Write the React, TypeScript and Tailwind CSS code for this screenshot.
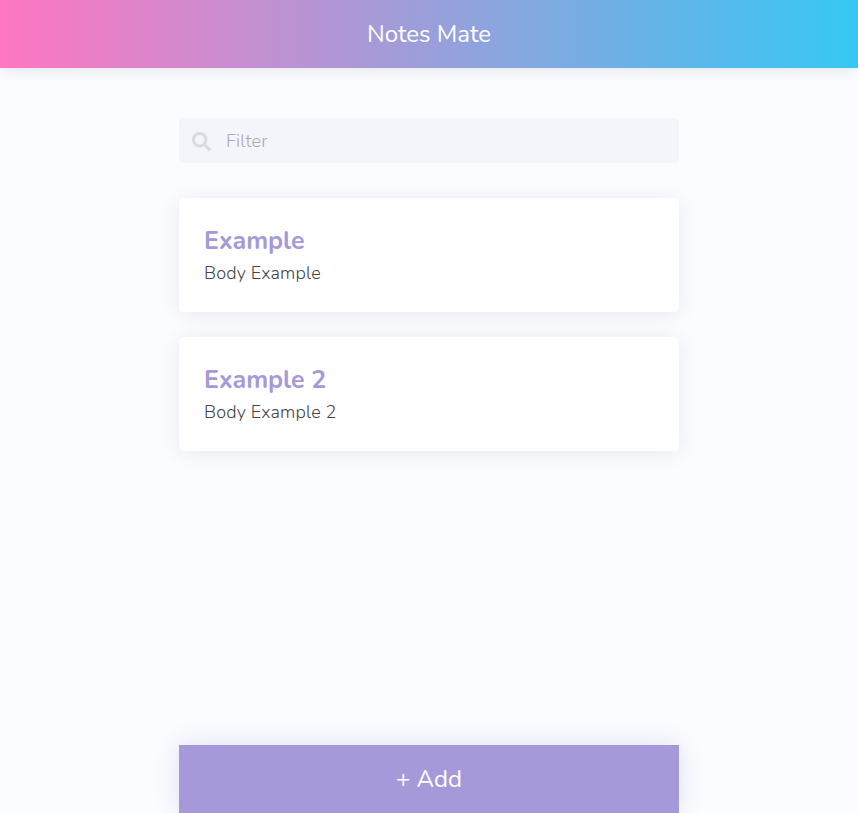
import { FaSearch } from "react-icons/fa";

const notes = [
  { title: "Example", body: "Body Example" },
  { title: "Example 2", body: "Body Example 2" },
];

export default function App() {
  return (
    <div className="flex h-[813px] flex-col items-center overflow-hidden bg-[#fbfcff] font-[Nunito,'Open_Sans',sans-serif]">
      <header className="flex h-[68px] w-full shrink-0 items-center justify-center bg-[linear-gradient(to_right,#ff76c1,#36c8f4)] text-2xl text-white shadow-[0_0_15px_rgba(0,0,0,0.12)]">
        Notes Mate
      </header>
      <main className="flex w-[500px] grow flex-col pt-[50px]">
        <label className="flex h-[45px] items-center rounded-[5px] bg-[#f3f5fa] pl-[13px]">
          <FaSearch className="mt-px size-[19px] text-[#dadada]" />
          <input placeholder="Filter" className="ml-[15px] grow text-lg font-light tracking-[0.17px] outline-none placeholder:text-[#a9a9b5]" />
        </label>
        <div className="mt-[35px] flex flex-col gap-[25px]">
          {notes.map((n) => (
            <article key={n.title} className="h-[114px] rounded-[5px] bg-white px-[25px] pt-[26px] shadow-[0_2px_20px_rgba(0,0,20,0.08)]">
              <h2 className="text-[25px] leading-[34px] font-bold text-[#a599d9]">{n.title}</h2>
              <p className="mt-px text-lg font-light tracking-[0.15px] text-[#444]">{n.body}</p>
            </article>
          ))}
        </div>
        <button className="mt-auto h-[68px] bg-[#a599d9] text-2xl text-white shadow-[0_0_25px_rgba(80,70,180,0.16)]">+ Add</button>
      </main>
    </div>
  );
}
